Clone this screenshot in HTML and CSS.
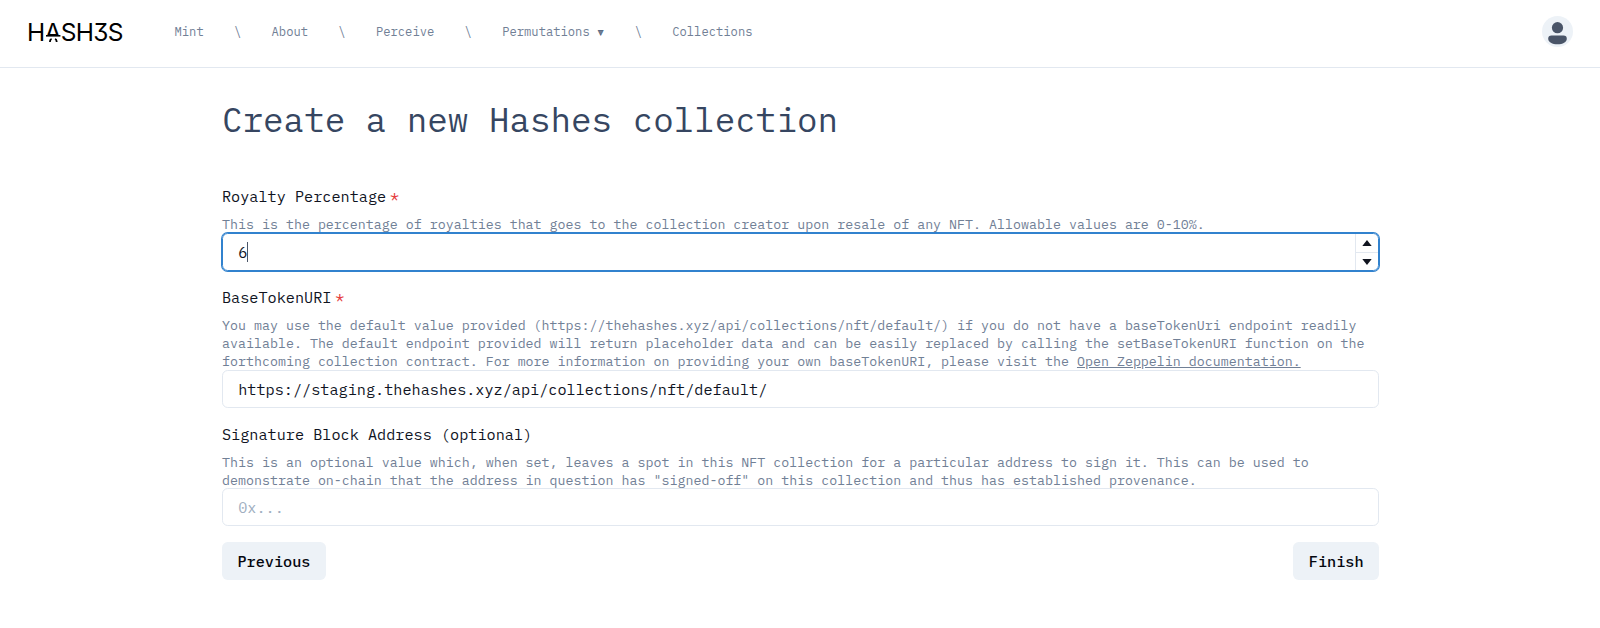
FILE: index.html
```html
<!DOCTYPE html>
<html lang="en">
<head>
<meta charset="utf-8">
<title>Hashes</title>
<link rel="stylesheet" href="styles.css">
</head>
<body>
<header class="header">
  <a class="logo"><span>H</span><span class="logo-a">A<svg class="logo-mark" viewBox="0 0 18 8"><rect x="1" width="16" height="8" fill="#fff"/><path d="M2 .8H16.400" fill="none" stroke="#000" stroke-width="1.600"/><path d="M6 7V6Q6.200 4.500 7.700 4.200M12.600 7V6Q12.400 4.500 10.900 4.200" fill="none" stroke="#000" stroke-width="1.800"/></svg></span><span>SH3S</span></a>
  <nav class="nav">
    <a>Mint</a><span>\</span><a>About</a><span>\</span><a>Perceive</a><span>\</span><a>Permutations <span class="caret-down">▾</span></a><span>\</span><a>Collections</a>
  </nav>
  <svg class="avatar" viewBox="0 0 31 31"><circle cx="15.5" cy="15.5" r="15.5" fill="#edf2f7"/><circle cx="15.5" cy="11.7" r="5.6" fill="#4a5568"/><path d="M9.5 19.4h12a3.3 3.3 0 0 1 3.3 3.3c0 3.500-4 5.600-9.300 5.600s-9.300-2.100-9.300-5.600a3.300 3.300 0 0 1 3.300-3.300z" fill="#4a5568"/></svg>
</header>
<main class="main">
  <h1>Create a new Hashes collection</h1>
  <form class="form">
    <div class="field">
      <label>Royalty Percentage<span class="req">*</span></label>
      <p class="help">This is the percentage of royalties that goes to the collection creator upon resale of any NFT. Allowable values are 0-10%.</p>
      <div class="number focused">
        <input class="input" type="text" value="6">
        <i class="text-caret"></i>
        <div class="stepper">
          <span><svg viewBox="0 0 10 6"><path d="M5 0 9.700 6H.3z"/></svg></span>
          <span><svg viewBox="0 0 10 6"><path d="M.3 0h9.400L5 6z"/></svg></span>
        </div>
      </div>
    </div>
    <div class="field">
      <label>BaseTokenURI<span class="req">*</span></label>
      <p class="help">You may use the default value provided (https://thehashes.xyz/api/collections/nft/default/) if you do not have a baseTokenUri endpoint readily<br>available. The default endpoint provided will return placeholder data and can be easily replaced by calling the setBaseTokenURI function on the<br>forthcoming collection contract. For more information on providing your own baseTokenURI, please visit the <a class="link">Open Zeppelin documentation.</a></p>
      <input class="input" type="text" value="https://staging.thehashes.xyz/api/collections/nft/default/">
    </div>
    <div class="field">
      <label>Signature Block Address (optional)</label>
      <p class="help">This is an optional value which, when set, leaves a spot in this NFT collection for a particular address to sign it. This can be used to<br>demonstrate on-chain that the address in question has "signed-off" on this collection and thus has established provenance.</p>
      <input class="input" type="text" placeholder="0x...">
    </div>
    <div class="actions">
      <button type="button">Previous</button>
      <button type="button">Finish</button>
    </div>
  </form>
</main>
</body>
</html>
```

FILE: styles.css
```css
* { box-sizing: border-box; margin: 0; padding: 0; }
body {
  font-family: "IBM Plex Mono", "Liberation Mono", monospace;
  font-size: 15.2px;
  line-height: 22.8px;
  color: #10141f;
  background: #fff;
  overflow: hidden;
}
.header {
  display: flex;
  align-items: center;
  height: 68px;
  padding: 0 27px 4px 27px;
  border-bottom: 1px solid #e2e8f0;
}
.logo {
  display: flex;
  width: 147.5px;
  font: 400 24.5px/30px Inter, sans-serif;
  font-feature-settings: "cv09";
  letter-spacing: -0.7px;
  color: #000;
}
.logo-a { position: relative; }
.logo-mark { position: absolute; left: -1px; top: 18px; width: 18px; height: 8px; }
.nav { display: flex; gap: 30.3px; font-size: 12.16px; line-height: 18px; color: #718096; white-space: pre; }
.nav a { height: 18px; }
.caret-down { line-height: 1; -webkit-text-stroke: 0.8px #5b6b84; }
.avatar { width: 31px; height: 31px; margin-left: auto; }
.main { width: 1157px; margin-left: 222px; }
h1 {
  padding-top: 31px;
  font-size: 34.2px;
  line-height: 41px;
  font-weight: 400;
  letter-spacing: 0.02px;
  color: #364661;
}
.form { display: flex; flex-direction: column; gap: 15.2px; margin-top: 45.2px; }
label { display: block; margin-bottom: 8.3px; letter-spacing: 0.01px; }
.req { margin-left: 3.800px; color: #e53e3e; }
.help { margin-bottom: -0.9px; font-size: 13.3px; line-height: 17.7px; letter-spacing: 0.012px; color: #718096; white-space: nowrap; }
.link { text-decoration: underline; }
.input {
  display: block;
  width: 100%;
  height: 38px;
  padding: 0 15.2px;
  font: inherit;
  letter-spacing: 0.01px;
  color: inherit;
  border: 1px solid #e2e8f0;
  border-radius: 5.700px;
  outline: none;
  background: transparent;
}
.input::placeholder { color: #a0aec0; }
.number { position: relative; }
.focused .input { border-color: #3182ce; box-shadow: 0 0 0 1px #3182ce; }
.text-caret { position: absolute; left: 25px; top: 9px; width: 1px; height: 20px; background: #4a5568; }
.stepper { position: absolute; top: 1px; right: 1px; width: 23px; height: 36px; display: grid; grid-template-rows: 1fr 1fr; border-left: 1px solid #e2e8f0; }
.stepper span { display: grid; place-items: center; }
.stepper span + span { border-top: 1px solid #e2e8f0; }
.stepper svg { width: 10px; height: 6px; fill: #10141f; }
.actions { display: flex; justify-content: space-between; }
button {
  height: 38px;
  padding: 0 15.4px;
  font: 500 15.2px/18px "IBM Plex Mono", "Liberation Mono", monospace;
  letter-spacing: 0.02px;
  color: #05070f;
  background: #edf2f7;
  border: 0;
  border-radius: 5.700px;
}
```
